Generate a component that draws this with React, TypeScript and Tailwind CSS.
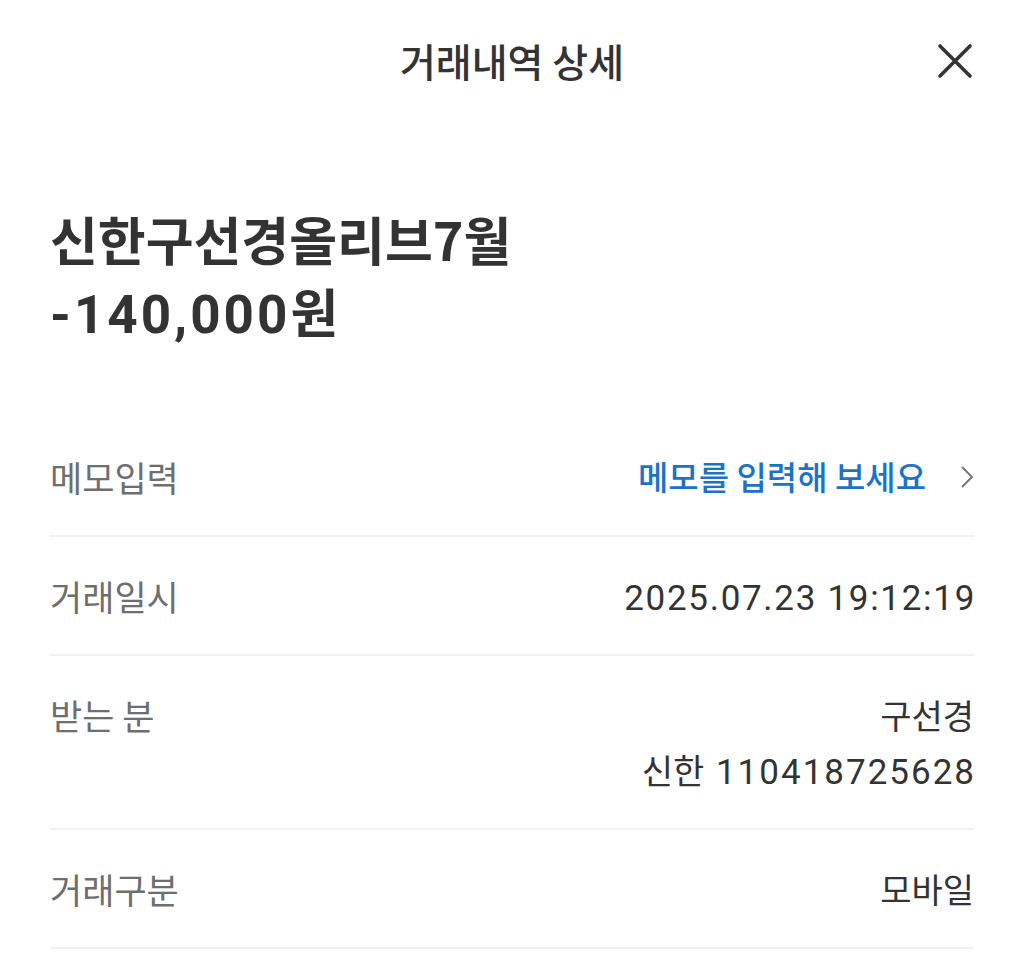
import React from "react";

const font = { fontFamily: '"Noto Sans CJK KR", "Noto Sans", sans-serif' };
const numFont = { fontFamily: 'Roboto, "Noto Sans CJK KR", sans-serif' };

function Row({ label, children }: { label: string; children: React.ReactNode }) {
  return (
    <div className="flex justify-between border-b-2 border-[#f1f1f1] py-[31px] leading-[55px]">
      <div className="h-[55px] whitespace-nowrap text-[35px] text-[#6e6e6e]">{label}</div>
      <div className="whitespace-nowrap text-right text-[34px] text-[#333333]">{children}</div>
    </div>
  );
}

export default function App() {
  return (
    <div className="min-h-[967px] w-[1024px] bg-white" style={font}>
      <div className="relative flex h-[120px] items-center justify-center">
        <div className="text-[39px] font-medium text-[#333333]">거래내역 상세</div>
        <button className="absolute right-[50px] top-[42px] h-[38px] w-[38px]">
          <svg viewBox="0 0 38 38" className="h-[38px] w-[38px]">
            <path d="M4 4 L34 34 M34 4 L4 34" stroke="#333333" strokeWidth="3.6" strokeLinecap="round" />
          </svg>
        </button>
      </div>
      <div className="px-[50px]">
        <div className="mt-[83px] text-[52px] font-bold leading-[72px] text-[#333333]">
          <div className="h-[72px]">신한구선경올리브7월</div>
          <div className="h-[72px]">
            <span className="text-[53px] tracking-[3px]" style={numFont}>-140,000</span>원
          </div>
        </div>
        <div className="mt-[71px]">
          <Row label="메모입력">
            <div className="flex h-[55px] items-center gap-[34px]">
              <span className="text-[33px] font-medium text-[#1a73c8]">메모를 입력해 보세요</span>
              <svg viewBox="0 0 14 24" className="h-[24px] w-[14px]">
                <path d="M2 2 L12 12 L2 22" stroke="#777777" strokeWidth="2" fill="none" />
              </svg>
            </div>
          </Row>
          <Row label="거래일시">
            <div className="h-[55px] mr-[-2px]">
              <span className="text-[35px] tracking-[1.7px]" style={numFont}>2025.07.23 19:12:19</span>
            </div>
          </Row>
          <Row label="받는 분">
            <div className="h-[55px]">구선경</div>
            <div className="h-[55px] mr-[-2px]">
              신한{" "}
              <span className="ml-[4px] text-[35px] tracking-[2px]" style={numFont}>110418725628</span>
            </div>
          </Row>
          <Row label="거래구분">
            <div className="h-[55px]">모바일</div>
          </Row>
        </div>
      </div>
    </div>
  );
}
